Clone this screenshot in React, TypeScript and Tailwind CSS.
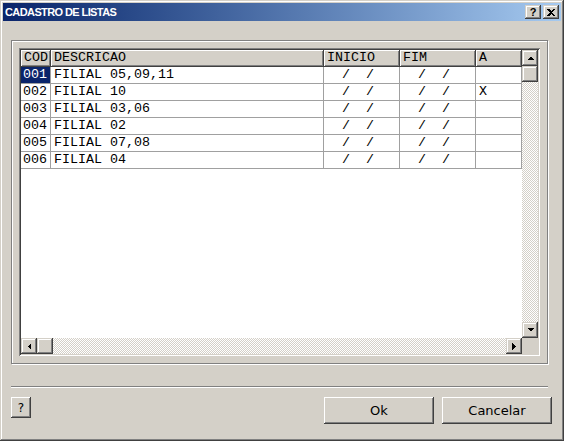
import React from "react";

const raisedBtn =
  "shadow-[inset_-1px_-1px_#404040,inset_1px_1px_#fff,inset_-2px_-2px_#808080,inset_2px_2px_#d4d0c8]";
const raisedSb =
  "shadow-[inset_-1px_-1px_#404040,inset_1px_1px_#d4d0c8,inset_-2px_-2px_#808080,inset_2px_2px_#fff]";
const checker =
  "bg-[image:repeating-conic-gradient(#fff_0%_25%,#d4d0c8_0%_50%)] bg-[length:2px_2px]";

const rows = [
  { cod: "001", desc: "FILIAL 05,09,11", a: "" },
  { cod: "002", desc: "FILIAL 10", a: "X" },
  { cod: "003", desc: "FILIAL 03,06", a: "" },
  { cod: "004", desc: "FILIAL 02", a: "" },
  { cod: "005", desc: "FILIAL 07,08", a: "" },
  { cod: "006", desc: "FILIAL 04", a: "" },
];

const cols = [
  { title: "COD", w: "w-[30px]" },
  { title: "DESCRICAO", w: "w-[273px]" },
  { title: "INICIO", w: "w-[76px]" },
  { title: "FIM", w: "w-[76px]" },
  { title: "A", w: "w-[46px]" },
];

function Arrow({ dir }: { dir: "up" | "down" | "left" | "right" }) {
  const pts = {
    up: "0,4 7,4 3.5,0.5",
    down: "0,0 7,0 3.5,3.5",
    left: "4,0 4,7 0.5,3.5",
    right: "0,0 0,7 3.5,3.5",
  }[dir];
  const horiz = dir === "up" || dir === "down";
  return (
    <svg width={horiz ? 7 : 4} height={horiz ? 4 : 7} shapeRendering="crispEdges">
      <polygon points={pts} fill="#000" />
    </svg>
  );
}

function SbButton({ dir }: { dir: "up" | "down" | "left" | "right" }) {
  return (
    <div className={`w-[16px] h-[16px] shrink-0 bg-[#d4d0c8] flex items-center justify-center ${raisedSb}`}>
      <Arrow dir={dir} />
    </div>
  );
}

export default function App() {
  return (
    <div className="w-[564px] h-[441px] bg-[#d4d0c8] p-[3px] flex flex-col shadow-[inset_-1px_-1px_#404040,inset_1px_1px_#d4d0c8,inset_-2px_-2px_#808080,inset_2px_2px_#fff] font-['DejaVu_Sans',sans-serif]">
      {/* title bar */}
      <div className="h-[18px] shrink-0 flex items-center bg-linear-to-r from-[#0a246a] to-[#a6caf0] pl-[2px] pr-[2px]">
        <span className="text-white font-bold text-[11px] tracking-[-0.6px] font-['Liberation_Sans',sans-serif]">
          CADASTRO DE LISTAS
        </span>
        <div className="ml-auto flex gap-[2px]">
          <div className={`w-[16px] h-[14px] bg-[#d4d0c8] flex items-center justify-center ${raisedSb}`}>
            <span className="text-[11px] leading-none font-bold text-black font-['Liberation_Sans',sans-serif]">?</span>
          </div>
          <div className={`w-[16px] h-[14px] bg-[#d4d0c8] flex items-center justify-center ${raisedSb}`}>
            <svg width="8" height="7" shapeRendering="crispEdges">
              <path d="M0 0h2l2 2 2-2h2L5 3.5 8 7H6L4 5 2 7H0l3-3.5z" fill="#000" />
            </svg>
          </div>
        </div>
      </div>

      <div className="flex-1 flex flex-col pl-[8px] pr-[9px]">
        {/* group box */}
        <div className="mt-[19px] w-[537px] h-[324px] border border-[#808080] shadow-[inset_1px_1px_#fff,1px_1px_#fff] p-[7px]">
          <div className="w-[521px] h-[308px] p-[2px] flex flex-col shadow-[inset_1px_1px_#808080,inset_-1px_-1px_#fff,inset_2px_2px_#404040,inset_-2px_-2px_#d4d0c8]">
            <div className="flex h-[288px]">
              <div className="w-[501px] bg-white flex flex-col font-['Liberation_Mono',monospace] text-[13.33px] text-black">
                <div className="flex h-[17px]">
                  {cols.map((c) => (
                    <div
                      key={c.title}
                      className={`${c.w} h-[17px] bg-[#d4d0c8] border-r border-b border-[#404040] shadow-[inset_1px_1px_#fff,inset_-1px_-1px_#808080] pl-[3px] leading-[16px] whitespace-pre`}
                    >
                      {c.title}
                    </div>
                  ))}
                </div>
                {rows.map((r, i) => (
                  <div key={r.cod} className="flex h-[17px]">
                    <div
                      className={`w-[30px] border-r border-b border-[#a0a0a0] pl-[2px] leading-[16px] ${
                        i === 0 ? "bg-[#0a246a] text-white" : ""
                      }`}
                    >
                      {r.cod}
                    </div>
                    <div className="w-[273px] border-r border-b border-[#a0a0a0] pl-[3px] leading-[16px] whitespace-pre">
                      {r.desc}
                    </div>
                    <div className="w-[76px] border-r border-b border-[#a0a0a0] pl-[2px] leading-[16px] whitespace-pre">
                      {"  /  /"}
                    </div>
                    <div className="w-[76px] border-r border-b border-[#a0a0a0] pl-[2px] leading-[16px] whitespace-pre">
                      {"  /  /"}
                    </div>
                    <div className="w-[46px] border-r border-b border-[#a0a0a0] pl-[3px] leading-[16px] whitespace-pre">
                      {r.a}
                    </div>
                  </div>
                ))}
              </div>
              {/* vertical scrollbar */}
              <div className="w-[16px] flex flex-col">
                <SbButton dir="up" />
                <div className={`w-[16px] h-[16px] bg-[#d4d0c8] ${raisedSb}`} />
                <div className={`flex-1 ${checker}`} />
                <SbButton dir="down" />
              </div>
            </div>
            <div className="flex h-[16px]">
              <div className="w-[501px] flex">
                <SbButton dir="left" />
                <div className={`w-[16px] h-[16px] bg-[#d4d0c8] ${raisedSb}`} />
                <div className={`flex-1 ${checker}`} />
                <SbButton dir="right" />
              </div>
              <div className="w-[16px] bg-[#d4d0c8]" />
            </div>
          </div>
        </div>

        {/* separator */}
        <div className="mt-[22px] w-[537px] h-[2px] border-t border-b border-t-[#808080] border-b-white" />

        {/* buttons */}
        <div className="mt-[9px] flex items-start text-[13px] text-black">
          <div className={`w-[20px] h-[21px] bg-[#d4d0c8] flex items-center justify-center ${raisedBtn}`}>
            <span className="text-[12px] leading-none">?</span>
          </div>
          <div className={`ml-auto w-[110px] h-[27px] bg-[#d4d0c8] flex items-center justify-center ${raisedBtn}`}>
            Ok
          </div>
          <div className={`ml-[8px] w-[110px] h-[27px] bg-[#d4d0c8] flex items-center justify-center ${raisedBtn}`}>
            Cancelar
          </div>
        </div>
      </div>
    </div>
  );
}
